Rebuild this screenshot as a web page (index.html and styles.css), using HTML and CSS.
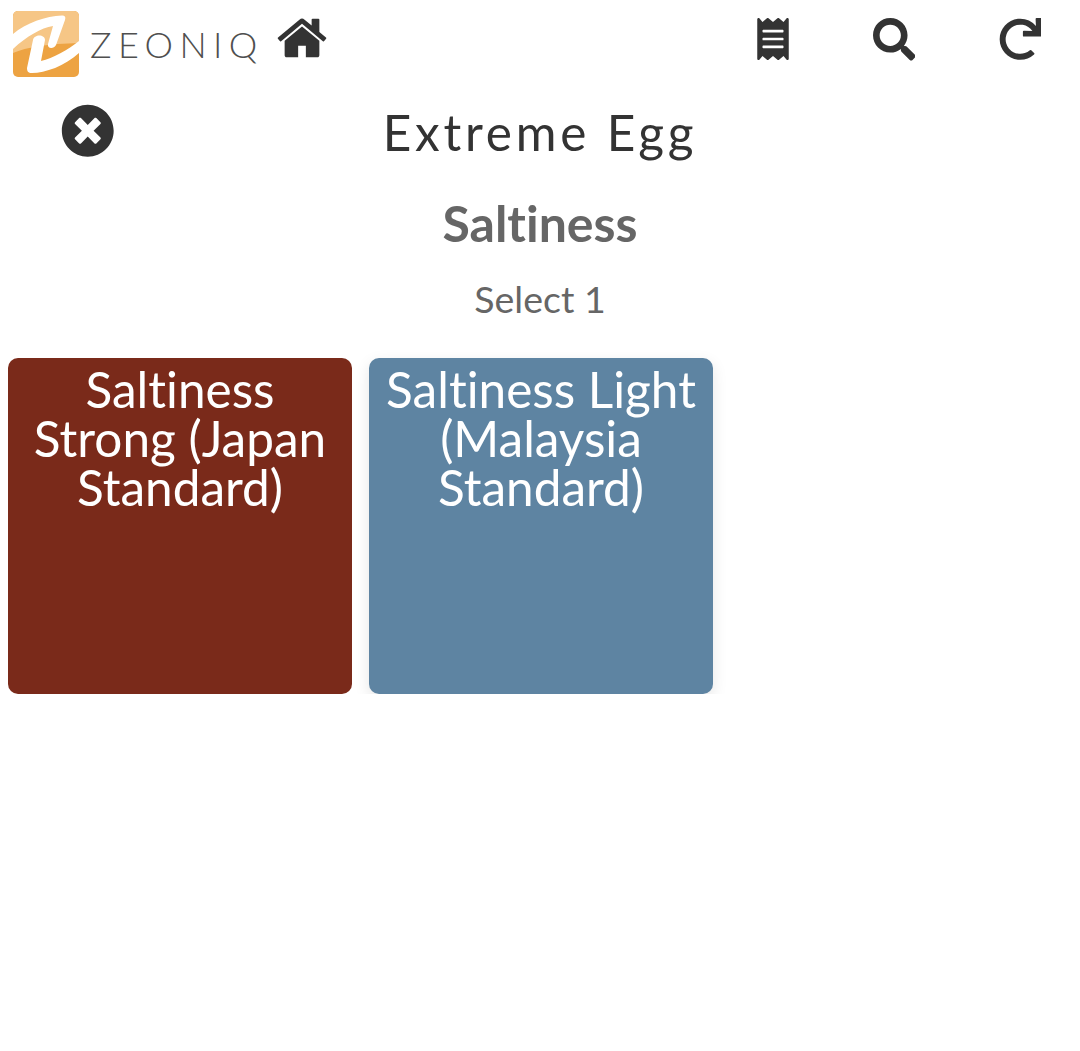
FILE: index.html
```html
<!DOCTYPE html>
<html lang="en">
<head>
    <meta charset="UTF-8">
    <title>Extreme Egg</title>
    <link rel="stylesheet" href="styles.css">
</head>
<body>

    <header class="topbar">
        <div class="brand">
            <svg class="logo-mark" viewBox="0 0 66 66">
                <rect width="66" height="66" rx="5" fill="#eda342"/>
                <path d="M5 0H61a5 5 0 0 1 5 5V32Q20 33 0 42V5a5 5 0 0 1 5-5z" fill="#f6c686"/>
                <path d="M0 23C13 12 33 5 49 4.500C52 4.400 53 6 52 9L43 34C41 38 34 38 35 33L40 15C28 17 14 25 0 38z" fill="#fff"/>
                <path d="M20 29C21 23 32 23 32 29L28 50C40 47 55 39 66 30V42C52 55 32 62 19 62C15 62 14 60 14 57z" fill="#fff"/>
            </svg>
            <span class="logo-text">ZEONIQ</span>
        </div>
        <a class="home-link">
            <svg class="icon-home" viewBox="0 0 1792 1792"><path d="M1472 992v480q0 26-19 45t-45 19h-384v-384h-256v384h-384q-26 0-45-19t-19-45v-480q0-1 .5-3t.5-3l575-474 575 474q1 2 1 6zm223-69l-62 74q-8 9-21 11h-3q-13 0-21-7l-692-577-692 577q-12 8-24 7-13-2-21-11l-62-74q-8-10-7-23.500t11-21.500l719-599q32-26 76-26t76 26l244 204v-195q0-14 9-23t23-9h192q14 0 23 9t9 23v408l219 182q10 8 11 21.500t-7 23.500z"/></svg>
        </a>
        <div class="actions">
            <svg class="icon-receipt" viewBox="0 0 384 512"><path d="M358.400 3.200L320 48 265.600 3.200a15.900 15.900 0 0 0-19.200 0L192 48 137.600 3.200a15.900 15.900 0 0 0-19.200 0L64 48 25.600 3.200C15-4.700 0 2.800 0 16v480c0 13.200 15 20.700 25.600 12.800L64 464l54.400 44.800a15.900 15.900 0 0 0 19.200 0L192 464l54.400 44.800a15.900 15.900 0 0 0 19.200 0L320 464l38.400 44.800c10.500 7.900 25.600.4 25.600-12.800V16c0-13.200-15-20.700-25.600-12.800zM320 360c0 4.400-3.600 8-8 8H72c-4.400 0-8-3.600-8-8v-16c0-4.400 3.600-8 8-8h240c4.400 0 8 3.600 8 8v16zm0-96c0 4.400-3.600 8-8 8H72c-4.400 0-8-3.600-8-8v-16c0-4.400 3.600-8 8-8h240c4.400 0 8 3.600 8 8v16zm0-96c0 4.400-3.600 8-8 8H72c-4.400 0-8-3.600-8-8v-16c0-4.400 3.600-8 8-8h240c4.400 0 8 3.600 8 8v16z"/></svg>
            <svg class="icon-search" viewBox="0 0 512 512"><path d="M505 442.700L405.300 343c-4.500-4.500-10.600-7-17-7H372c27.600-35.300 44-79.700 44-128C416 93.100 322.900 0 208 0S0 93.100 0 208s93.100 208 208 208c48.300 0 92.700-16.400 128-44v16.300c0 6.400 2.500 12.500 7 17l99.700 99.700c9.400 9.400 24.600 9.400 33.900 0l28.300-28.300c9.400-9.400 9.400-24.600.1-34zM208 336c-70.700 0-128-57.200-128-128 0-70.700 57.200-128 128-128 70.700 0 128 57.200 128 128 0 70.700-57.200 128-128 128z"/></svg>
            <svg class="icon-redo" viewBox="0 0 512 512"><path d="M500.330 0h-47.410a12 12 0 0 0-12 12.570l4 82.760A247.420 247.420 0 0 0 256 8C119.340 8 7.900 119.530 8 256.190 8.100 393.070 119.100 504 256 504a247.100 247.100 0 0 0 166.180-63.910 12 12 0 0 0 .48-17.430l-34-34a12 12 0 0 0-16.380-.55A176 176 0 1 1 402.100 157.800l-101.530-4.870a12 12 0 0 0-12.570 12v47.410a12 12 0 0 0 12 12h200.330a12 12 0 0 0 12-12V12a12 12 0 0 0-12-12z"/></svg>
        </div>
    </header>

    <div class="title-row">
        <svg class="icon-close" viewBox="0 0 512 512"><path d="M256 8C119 8 8 119 8 256s111 248 248 248 248-111 248-248S393 8 256 8zm121.600 313.100c4.700 4.700 4.700 12.300 0 17L338 377.600c-4.700 4.700-12.300 4.700-17 0L256 312l-65.100 65.600c-4.700 4.700-12.300 4.700-17 0L134.400 338c-4.700-4.700-4.700-12.300 0-17l65.600-65-65.600-65.100c-4.700-4.700-4.700-12.300 0-17l39.600-39.600c4.700-4.700 12.300-4.700 17 0l65 65.700 65.100-65.600c4.700-4.700 12.300-4.700 17 0l39.600 39.600c4.700 4.700 4.700 12.300 0 17L312 256l65.600 65.100z"/></svg>
        <h1>Extreme Egg</h1>
    </div>

    <h2 class="group-name">Saltiness</h2>
    <p class="group-hint">Select 1</p>

    <div class="options">
        <div class="option option-red">Saltiness Strong (Japan Standard)</div>
        <div class="option option-blue">Saltiness Light (Malaysia Standard)</div>
    </div>

</body>
</html>
```

FILE: styles.css
```css
body {
    margin: 0;
    padding: 0 8px;
    font-family: 'Lato', 'Open Sans', sans-serif;
    font-variant-ligatures: none;
    background: #fff;
    color: #333;
}

svg {
    fill: #333;
    display: block;
    flex: none;
}

/* Шапка */
.topbar {
    display: flex;
    align-items: flex-start;
    height: 90px;
    padding-top: 11px;
    box-sizing: border-box;
}

.brand {
    display: flex;
    align-items: center;
    margin-left: 5px;
    width: 262px;
}

.logo-mark {
    width: 66px;
    height: 66px;
}

.logo-text {
    margin: 0 0 0 11px;
    font-size: 36px;
    font-weight: 300;
    letter-spacing: 6.4px;
    color: #4f4f4f;
}

.icon-home {
    width: 54px;
    height: 54px;
}

.actions {
    display: flex;
    margin-left: auto;
    padding: 7px 31px 0 0;
    gap: 83.5px;
}

.icon-receipt {
    width: 32px;
    height: 42px;
}

.icon-search,
.icon-redo {
    width: 42.5px;
    height: 42.5px;
}

/* Заголовок */
.title-row {
    position: relative;
    height: 78px;
    text-align: center;
}

.icon-close {
    position: absolute;
    left: 53px;
    top: 14px;
    width: 53.5px;
    height: 53.5px;
}

h1 {
    margin: 0;
    font-size: 49.5px;
    line-height: 84px;
    font-weight: 400;
    letter-spacing: 3.8px;
}

.group-name {
    margin: 23px 0 0;
    font-size: 50px;
    line-height: 64px;
    font-weight: 700;
    color: #666;
    text-align: center;
}

.group-hint {
    margin: 20px 0 0;
    font-size: 37.5px;
    line-height: 48px;
    color: #666;
    text-align: center;
}

/* Варианты */
.options {
    display: grid;
    grid-template-columns: repeat(3, 344px);
    gap: 17px;
    margin-top: 35px;
}

.option {
    height: 336px;
    padding: 7px 10px;
    box-sizing: border-box;
    border-radius: 10px;
    color: #fff;
    font-size: 49.5px;
    line-height: 49px;
    text-align: center;
}

.option-red {
    background: #7a2a1a;
}

.option-blue {
    background: #5e84a2;
    box-shadow: 0 5px 15px rgba(0, 0, 0, 0.1);
}
```
